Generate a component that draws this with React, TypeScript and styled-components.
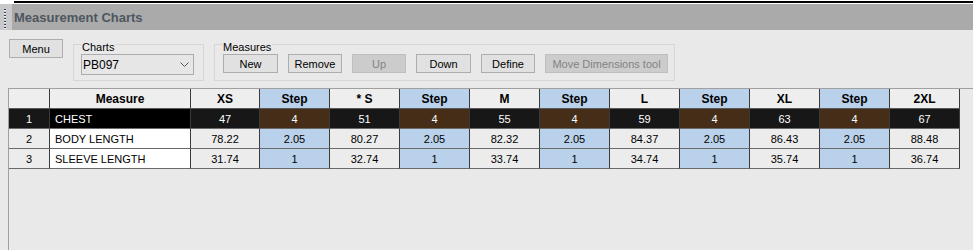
import React from 'react';
import styled, { createGlobalStyle } from 'styled-components';

const Global = createGlobalStyle`
  html, body { margin: 0; padding: 0; background: #e9e9e9; }
  body { font-family: "Liberation Sans", Arial, sans-serif; }
  #root { height: 250px; overflow: hidden; }
`;

const Page = styled.div`
  display: flex;
  flex-direction: column;
  height: 250px;
  background: #e9e9e9;
`;

const TopEdge = styled.div`
  height: 4px;
  box-sizing: border-box;
  padding-top: 1px;
  background: #ffffff;
`;

const TopRule = styled.div`
  margin-left: 14px;
  height: 2px;
  background: #000000;
`;

const TitleBar = styled.div`
  display: flex;
  height: 26px;
`;

const Grip = styled.div`
  width: 12px;
  box-sizing: border-box;
  padding: 5px 0 0 4px;
  background: #c9c9c9;
`;

const GripDots = styled.div`
  width: 2px;
  height: 20px;
  background-image: repeating-linear-gradient(to bottom, #2c3e6a 0 1px, #f4f4f4 1px 2px, transparent 2px 3px);
`;

const Title = styled.div`
  flex: 1;
  box-sizing: border-box;
  background: #aaaaaa;
  padding: 1px 0 0 2px;
  font-weight: bold;
  font-size: 13px;
  line-height: 25px;
  color: #4e5660;
`;

const Toolbar = styled.div`
  display: flex;
  align-items: flex-start;
  gap: 10px;
  height: 58px;
  box-sizing: border-box;
  padding: 9px 0 0 9px;
`;

const Button = styled.button<{ $w: number }>`
  width: ${p => p.$w}px;
  height: 19px;
  box-sizing: border-box;
  padding: 0;
  margin: 0;
  background: #e1e1e1;
  border: 1px solid #adadad;
  font-family: "Liberation Sans", Arial, sans-serif;
  font-size: 11px;
  color: #000;
  &:disabled {
    background: #cccccc;
    border-color: #bfbfbf;
    color: #838383;
  }
`;

const GroupBox = styled.div<{ $w: number }>`
  width: ${p => p.$w}px;
  height: 37px;
  margin-top: 5px;
  box-sizing: border-box;
  border: 1px solid #d6d6d6;
  display: flex;
  flex-direction: column;
`;

const GroupLabel = styled.div`
  align-self: flex-start;
  margin: -4px 0 0 7px;
  padding: 0 1px;
  background: #e9e9e9;
  font-size: 11px;
  line-height: 13px;
  color: #000;
`;

const GroupBody = styled.div<{ $inset: number }>`
  display: flex;
  gap: 10px;
  padding-left: ${p => p.$inset}px;
`;

const Select = styled.div`
  width: 113px;
  height: 21px;
  box-sizing: border-box;
  border: 1px solid #acacac;
  background: #e6e6e6;
  display: flex;
  align-items: center;
  justify-content: space-between;
  padding: 0 4px 0 1px;
  font-size: 12px;
  color: #000;
`;

const GridFrame = styled.div`
  flex: 1;
  margin-left: 8px;
  border-top: 1px solid #a0a0a0;
  border-left: 1px solid #a0a0a0;
  background: #e9e9e9;
`;

const Table = styled.div`
  display: grid;
  grid-template-columns: 41px 141px 69px repeat(10, 70px);
  grid-auto-rows: 20px;
  width: 951px;
`;

type Kind = 'head' | 'headStep' | 'num' | 'measure' | 'size' | 'step';

const bg = (k: Kind, sel: boolean) => {
  if (sel) {
    if (k === 'measure') return '#000000';
    if (k === 'step') return '#452d17';
    return '#171717';
  }
  switch (k) {
    case 'head': return '#eeeeee';
    case 'headStep': return '#b9d1ea';
    case 'measure': return '#ffffff';
    case 'step': return '#b9d1ea';
    default: return '#ececec';
  }
};

const isHead = (k: Kind) => k === 'head' || k === 'headStep';

const Cell = styled.div<{ $k: Kind; $sel?: boolean }>`
  box-sizing: border-box;
  border-right: 1px solid #3a3a3a;
  border-bottom: 1px solid ${p => (isHead(p.$k) ? '#5a5a5a' : '#6a6a6a')};
  background: ${p => bg(p.$k, !!p.$sel)};
  color: ${p => (p.$sel ? '#ffffff' : '#000000')};
  font-size: ${p => (isHead(p.$k) ? '12px' : '11px')};
  font-weight: ${p => (isHead(p.$k) ? 'bold' : 'normal')};
  padding-top: 1px;
  line-height: 18px;
  text-align: ${p => (p.$k === 'measure' ? 'left' : 'center')};
  padding-left: ${p => (p.$k === 'measure' ? '5px' : '0')};
  white-space: nowrap;
  overflow: hidden;
`;

const headers = ['', 'Measure', 'XS', 'Step', '* S', 'Step', 'M', 'Step', 'L', 'Step', 'XL', 'Step', '2XL'];

const rows: { name: string; values: string[] }[] = [
  { name: 'CHEST', values: ['47', '4', '51', '4', '55', '4', '59', '4', '63', '4', '67'] },
  { name: 'BODY LENGTH', values: ['78.22', '2.05', '80.27', '2.05', '82.32', '2.05', '84.37', '2.05', '86.43', '2.05', '88.48'] },
  { name: 'SLEEVE LENGTH', values: ['31.74', '1', '32.74', '1', '33.74', '1', '34.74', '1', '35.74', '1', '36.74'] },
];

const Chevron = () => (
  <svg width="9" height="6" viewBox="0 0 9 6">
    <path d="M0.5 0.5 L4.5 4.5 L8.5 0.5" fill="none" stroke="#5a5a5a" strokeWidth="1" />
  </svg>
);

export default function App() {
  return (
    <Page>
      <Global />
      <TopEdge>
        <TopRule />
      </TopEdge>
      <TitleBar>
        <Grip>
          <GripDots />
        </Grip>
        <Title>Measurement Charts</Title>
      </TitleBar>
      <Toolbar>
        <Button $w={54}>Menu</Button>
        <GroupBox $w={131}>
          <GroupLabel>Charts</GroupLabel>
          <GroupBody $inset={7}>
            <Select>
              <span>PB097</span>
              <Chevron />
            </Select>
          </GroupBody>
        </GroupBox>
        <GroupBox $w={461}>
          <GroupLabel>Measures</GroupLabel>
          <GroupBody $inset={8}>
            <Button $w={55}>New</Button>
            <Button $w={54}>Remove</Button>
            <Button $w={54} disabled>Up</Button>
            <Button $w={55}>Down</Button>
            <Button $w={54}>Define</Button>
            <Button $w={123} disabled>Move Dimensions tool</Button>
          </GroupBody>
        </GroupBox>
      </Toolbar>
      <GridFrame>
        <Table>
          {headers.map((h, i) => (
            <Cell key={'h' + i} $k={h === 'Step' ? 'headStep' : 'head'}>{h}</Cell>
          ))}
          {rows.map((r, ri) => {
            const sel = ri === 0;
            return (
              <React.Fragment key={r.name}>
                <Cell $k="num" $sel={sel}>{ri + 1}</Cell>
                <Cell $k="measure" $sel={sel}>{r.name}</Cell>
                {r.values.map((v, vi) => (
                  <Cell key={vi} $k={vi % 2 === 1 ? 'step' : 'size'} $sel={sel}>{v}</Cell>
                ))}
              </React.Fragment>
            );
          })}
        </Table>
      </GridFrame>
    </Page>
  );
}
